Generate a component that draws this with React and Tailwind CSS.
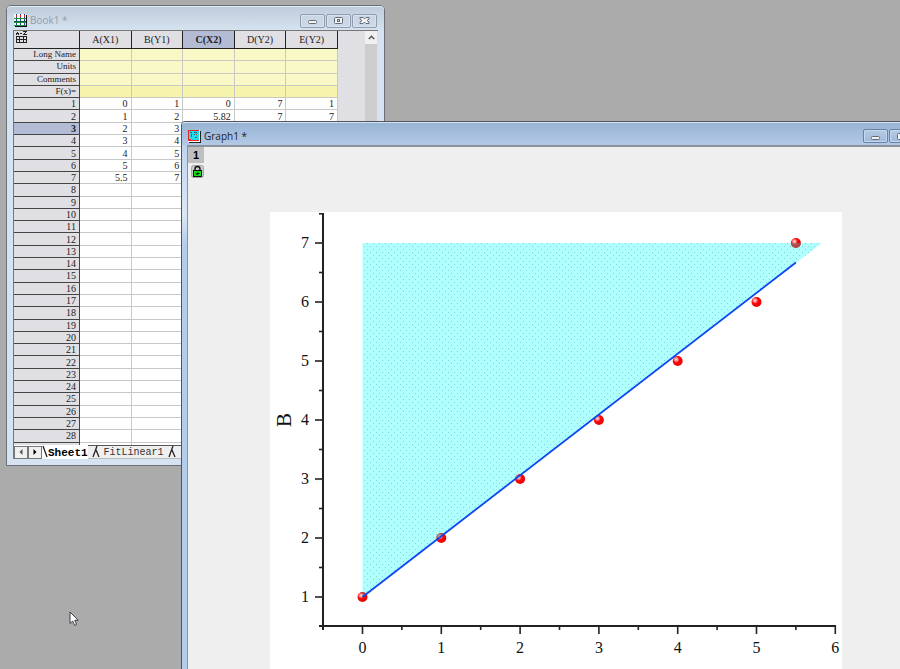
import { useState } from "react";

const columns = ["A(X1)", "B(Y1)", "C(X2)", "D(Y2)", "E(Y2)"];
const labels = ["Long Name", "Units", "Comments", "F(x)="];
const data = [
  [0, 1, 0, 7, 1],
  [1, 2, 5.82, 7, 7],
  [2, 3],
  [3, 4],
  [4, 5],
  [5, 6],
  [5.5, 7],
];
const rows = Array.from({ length: 29 }, (_, i) => data[i] || []);

// Plot scales
const px = (x) => 92.5 + x * 78.8;
const py = (y) => 444 - y * 59;

const points = [[0, 1], [1, 2], [2, 3], [3, 4], [4, 5], [5, 6], [5.5, 7]];
const area = `${px(0)},${py(1)} ${px(0)},${py(7)} ${px(5.83)},${py(7)}`;

function WindowButtons({ active }) {
  const style = active
    ? "flex h-[14px] w-[25px] items-center justify-center rounded-[2px] border border-[#6681a3] bg-linear-to-b from-[#b5cbe4] to-[#9ebadb] shadow-[inset_0_0_0_1px_#c5d8ee]"
    : "flex h-[14px] w-[25px] items-center justify-center rounded-[2px] border border-[#929dac] bg-linear-to-b from-[#c9d5e3] to-[#ccd9e8] shadow-[inset_0_0_0_1px_#d8e3ef]";
  return (
    <div className="flex gap-px">
      <button className={style} aria-label="Minimize">
        <svg width="11" height="9" viewBox="0 0 11 9">
          <rect x="1.5" y="4.5" width="8" height="3" rx="1" fill="#f4f4f4" stroke="#646b78" />
        </svg>
      </button>
      <button className={style} aria-label="Restore">
        <svg width="11" height="9" viewBox="0 0 11 9">
          <rect x="1.5" y="1.5" width="8" height="6" rx="1" fill="#f4f4f4" stroke="#646b78" />
          <rect x="4.5" y="3.5" width="2" height="2" fill="#dde6f0" stroke="#646b78" />
        </svg>
      </button>
      <button className={style} aria-label="Close">
        <svg width="11" height="9" viewBox="0 0 11 9">
          <path d="M1 1.500h3l1.500 1.500 1.500-1.500h3v1.500L8 4.500l2 1.500v1.500H7L5.500 6 4 7.500H1V6l2-1.500L1 3z" fill="#f4f4f4" stroke="#646b78" />
        </svg>
      </button>
    </div>
  );
}

function BookIcon() {
  return (
    <svg width="13" height="13" viewBox="0 0 13 13" shapeRendering="crispEdges">
      <path d="M1 1h12v12H1z" fill="#111" />
      <path d="M0 0h12v12H0z" fill="#fff" />
      <path d="M2 0h1v12H2zM6 0h1v12H6zM10 0h1v12H10z" fill="#1d3f8f" />
      <path d="M0 4h12v1H0zM0 8h12v1H0z" fill="#16963f" />
      <path d="M0 7h12v1H0z" fill="#0d5a3a" />
      <path d="M0 11h12v1H0z" fill="#16963f" />
      <path d="M2 1h1v2H2zM6 1h1v2H6zM10 1h1v2H10z" fill="#e02020" />
    </svg>
  );
}

function GraphIcon() {
  return (
    <svg width="13" height="13" viewBox="0 0 13 13" shapeRendering="crispEdges">
      <path d="M1 1h12v12H1z" fill="#222" />
      <path d="M0 0h12v12H0z" fill="#fff" />
      <path d="M0 0h11v11H0z" fill="#e5252a" />
      <path d="M1 1h10v9H1z" fill="#22dcea" />
      <path d="M2 2h2v1H2zM6 2h3v1H6zM3 4h1v3H3zM6 4h1v1H6zM7 7h2v1H7z" fill="#176d86" />
      <path d="M1 9h2v1H1zM8 4h1v1H8z" fill="#e5252a" />
    </svg>
  );
}

function SortIcon() {
  return (
    <svg width="13" height="13" viewBox="0 0 13 13" shapeRendering="crispEdges" fill="none" stroke="#222">
      <path d="M2.500 1v1M1.500 2v2M3.500 2v2M1 2.500h3M5 2.500h2M8 .5h4M10.500 1v1M9.500 2v1M8 3.500h4" />
      <path d="M1 5.500h11M1 8.500h11M1 11.500h11M1.500 5v7M4.500 5v7M8.500 5v7M11.500 5v7" />
    </svg>
  );
}

function Worksheet({ selectedCol, selectedRow }) {
  return (
    <table className="h-[424px] w-[324px] shrink-0 table-fixed border-separate border-spacing-0 bg-white text-right font-['Liberation_Serif',serif] text-[10px] leading-[11px] text-[#222]">
      <thead>
        <tr className="h-[18px] bg-[#e0dfe4]">
          <th className="h-[18px] w-[66px] border-r border-b border-[#222] py-0 pr-0 pl-px text-left align-top">
            <SortIcon />
          </th>
          {columns.map((c, i) => (
            <th
              key={c}
              scope="col"
              className={
                i === selectedCol
                  ? "border-r border-b border-[#222] bg-[#b3bbd5] p-0 text-center font-bold"
                  : "border-r border-b border-[#222] p-0 text-center font-normal"
              }
            >
              {c}
            </th>
          ))}
        </tr>
      </thead>
      <tbody>
        {labels.map((label) => (
          <tr key={label} className={label === "F(x)=" ? "bg-[#f6f3ac]" : "bg-[#f9f8c7]"}>
            <th scope="row" className="border-r border-b border-[#444] bg-[#e0dfe4] py-0 pr-[3px] pl-0 text-[9px] font-normal">
              {label}
            </th>
            {columns.map((c) => (
              <td key={c} className="border-r border-b border-[#c9c9c2] p-0" />
            ))}
          </tr>
        ))}
        {rows.map((row, i) => (
          <tr key={i}>
            <th
              scope="row"
              className={
                i === selectedRow
                  ? "border-r border-b border-[#444] bg-[#b3bbd5] py-0 pr-[3px] pl-0 font-bold"
                  : "border-r border-b border-[#444] bg-[#e0dfe4] py-0 pr-[3px] pl-0 font-normal"
              }
            >
              {i + 1}
            </th>
            {columns.map((c, j) => (
              <td key={c} className="border-r border-b border-[#c8c8c8] py-0 pr-[3px] pl-0">
                {row[j]}
              </td>
            ))}
          </tr>
        ))}
      </tbody>
    </table>
  );
}

function Plot() {
  const majorsX = [0, 1, 2, 3, 4, 5, 6];
  const majorsY = [1, 2, 3, 4, 5, 6, 7];
  return (
    <svg width="572" height="520" viewBox="0 0 572 520" className="block bg-white font-['Liberation_Serif',serif]" role="img" aria-label="B scatter with linear fit">
      <defs>
        <radialGradient id="ball" cx="0.35" cy="0.35" r="0.7">
          <stop offset="0" stopColor="#ffe4e4" />
          <stop offset="0.2" stopColor="#ff9a9a" />
          <stop offset="0.45" stopColor="#fb0808" />
          <stop offset="1" stopColor="#e80000" />
        </radialGradient>
        <pattern id="dots" width="6" height="6" patternUnits="userSpaceOnUse">
          <rect width="6" height="6" fill="#b0ffff" />
          <rect x="1" y="1" width="1" height="1" fill="#86d2d6" />
          <rect x="4" y="4" width="1" height="1" fill="#86d2d6" />
        </pattern>
        <clipPath id="inside">
          <polygon points={area} />
        </clipPath>
      </defs>

      <polygon points={area} fill="url(#dots)" />
      {points.map(([x, y]) => (
        <circle key={x} cx={px(x)} cy={py(y)} r="5" fill="url(#ball)" />
      ))}
      {/* Markers show darker where the area covers them */}
      <g clipPath="url(#inside)">
        {points.map(([x, y]) => (
          <circle key={x} cx={px(x)} cy={py(y)} r="5" fill="#6f8f8f" fillOpacity="0.5" />
        ))}
      </g>
      <line x1={px(0)} y1={py(1)} x2={px(5.5)} y2={py(6.67)} stroke="#0d47f2" strokeWidth="1.8" />

      <path d="M53 1V418M49 414H566" fill="none" stroke="#222" strokeWidth="2" />
      <g stroke="#222" strokeWidth="1.6">
        <path d="M49 1.800H53" />
        {majorsY.map((v) => (
          <path key={v} d={`M45 ${py(v)}H53`} />
        ))}
        {majorsY.slice(0, 6).map((v) => (
          <path key={v} d={`M49 ${py(v + 0.5)}H53`} />
        ))}
        {majorsX.map((v) => (
          <path key={v} d={`M${px(v)} 414V422`} />
        ))}
        {majorsX.slice(0, 6).map((v) => (
          <path key={v} d={`M${px(v + 0.5)} 414V418`} />
        ))}
      </g>

      <g fontSize="16" fill="#111">
        {majorsY.map((v) => (
          <text key={v} x="35" y={py(v) + 5} textAnchor="middle">{v}</text>
        ))}
        {majorsX.map((v) => (
          <text key={v} x={px(v)} y="441" textAnchor="middle">{v}</text>
        ))}
        <text transform="translate(21 208) rotate(-90)" fontSize="21" textAnchor="middle">B</text>
      </g>
    </svg>
  );
}

function TabDivider() {
  return (
    <svg width="16" height="14" viewBox="0 0 16 14" fill="none" stroke="#222" strokeWidth="1.3">
      <path d="M5 12 9 1M8 5l3 7" />
    </svg>
  );
}

function BookWindow() {
  const [tab, setTab] = useState("Sheet1");
  return (
    <section className="absolute top-[5px] left-[6px] flex h-[461px] w-[379px] flex-col rounded-t-[5px] border border-[#6b7077] bg-[#d6e3f2] px-[6px] pb-[6px]">
      <header className="-mx-[6px] flex h-6 shrink-0 items-center justify-between rounded-t-[4px] border-t border-[#e3ebf4] bg-linear-to-b from-[#bfccdb] to-[#d5e2f0] px-[7px] pt-1">
        <h1 className="flex items-center gap-[3px] font-['Open_Sans',sans-serif] text-[10px] text-[#979ea7]">
          <BookIcon />
          Book1 *
        </h1>
        <WindowButtons />
      </header>
      <div className="flex min-h-0 flex-1 flex-col border-t border-l border-[#777]">
        <div className="flex min-h-0 flex-1 overflow-hidden bg-[#e0dfe4]">
          <Worksheet selectedCol={2} selectedRow={2} />
          <div className="mr-px ml-auto flex w-3 flex-col bg-[#cdcdcd]">
            <button className="flex h-[13px] items-center justify-center bg-[#f0f0f0]" aria-label="Scroll up">
              <svg width="7" height="5" viewBox="0 0 7 5">
                <path d="M.8 4 3.500 1.300 6.200 4" fill="none" stroke="#555" strokeWidth="1.500" />
              </svg>
            </button>
          </div>
        </div>
        <nav className="flex h-[14px] shrink-0 items-center bg-white font-['Liberation_Mono',monospace] text-[10px] leading-[14px] text-[#333]">
          <button className="flex h-[13px] w-[14px] items-center justify-center border border-[#777] bg-[#f0f0f0]" aria-label="Previous sheet">
            <svg width="4" height="6" viewBox="0 0 4 6"><path d="M3.500 0v6L.5 3z" fill="#555" /></svg>
          </button>
          <button className="flex h-[13px] w-[14px] items-center justify-center border border-[#777] bg-[#f0f0f0]" aria-label="Next sheet">
            <svg width="4" height="6" viewBox="0 0 4 6"><path d="M.5 0v6l3-3z" fill="#000" /></svg>
          </button>
          <svg width="6" height="14" viewBox="0 0 6 14"><path d="M1 1 5 12" stroke="#222" strokeWidth="1.300" /></svg>
          <button className="pt-px text-[11px] font-bold text-black" onClick={() => setTab("Sheet1")} aria-current={tab === "Sheet1"}>
            Sheet1
          </button>
          <div className="flex h-[14px] flex-1 items-center border-t border-b border-t-[#555] border-b-[#bbb] bg-[#efefef]">
            <TabDivider />
            <button className="pt-px" onClick={() => setTab("FitLinear1")} aria-current={tab === "FitLinear1"}>
              FitLinear1
            </button>
            <TabDivider />
          </div>
        </nav>
      </div>
    </section>
  );
}

function GraphWindow() {
  return (
    <section className="absolute top-[121px] left-[181px] w-[766px] rounded-t-[4px] border border-[#4f5660] bg-linear-to-b from-[#b4cdea] from-0% via-[#dbe8f6] via-15% to-[#b4cdea] to-20% px-[5px] pb-[5px]">
      <header className="-mx-[5px] flex h-[23px] items-center justify-between rounded-t-[3px] border-t border-[#d5e2f1] bg-linear-to-b from-[#98b4d4] to-[#b3cae6] px-[6px] pt-1">
        <h2 className="flex items-center gap-[3px] font-['Open_Sans',sans-serif] text-[10px] text-[#222]">
          <GraphIcon />
          Graph1 *
        </h2>
        <WindowButtons active />
      </header>
      <div className="flex border-t-2 border-l border-[#8b929b] bg-[#efefef]">
        <div className="flex w-[82px] shrink-0 flex-col items-start gap-[2px]">
          <button className="h-4 w-4 bg-[#bfbfbf] font-['Liberation_Sans',sans-serif] text-[11px] leading-4 font-bold text-black">1</button>
          <button className="ml-[3px]" aria-label="Lock">
            <svg width="13" height="13" viewBox="0 0 13 13">
              <rect x="0.5" y="0.5" width="12" height="12" rx="2" fill="#c9c9c9" stroke="#a5a5a5" />
              <path d="M4 6V4a2.500 2.500 0 0 1 5 0v2" fill="none" stroke="#111" strokeWidth="1.400" />
              <rect x="2.5" y="5.5" width="8" height="6" fill="#11e01a" stroke="#111" />
              <path d="M4 8.500h2V7l3 1.500L6 10z" fill="#111" />
            </svg>
          </button>
        </div>
        <div className="pt-[65px]">
          <Plot />
        </div>
      </div>
    </section>
  );
}

function App() {
  return (
    <main className="relative h-screen overflow-hidden bg-[#ababab]">
      <BookWindow />
      <GraphWindow />
      {/* Mouse pointer */}
      <svg width="10" height="16" viewBox="0 0 10 16" className="absolute top-[611px] left-[69px]">
        <path d="M1 1v11.500l2.700-2.400 2 4.400 2-1-2-4.200H9.200z" fill="#fff" stroke="#3c3c46" strokeWidth="1" />
      </svg>
    </main>
  );
}

export default App;
